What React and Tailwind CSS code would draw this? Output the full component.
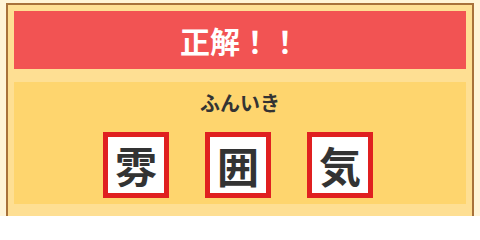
export default function App() {
  const chars = ["雰", "囲", "気"];
  return (
    <div
      className="h-[216px] overflow-hidden bg-[#fff4d6] px-[6px] pt-[3px]"
      style={{ fontFamily: '"Noto Sans CJK JP", "Noto Sans", sans-serif' }}
    >
      <div className="border-2 border-[#a8723a] bg-[#fedf93] p-[6px] pb-[20px]">
        <div className="flex h-[58px] items-center justify-center bg-[#f25353]">
          <span className="text-[30px] font-bold leading-none text-white">正解！！</span>
        </div>
        <div className="mt-[13px] flex flex-col items-center bg-[#fed56e] pb-[6px] pt-[7px]">
          <div className="text-[20px] font-bold leading-[28px] text-[#333333]">ふんいき</div>
          <div className="mr-[4px] mt-[15px] flex gap-[36px]">
            {chars.map((c) => (
              <div
                key={c}
                className="flex h-[66px] w-[66px] items-center justify-center border-[5px] border-[#e02020] bg-white"
              >
                <span className="text-[42px] font-bold leading-none text-[#333333]">{c}</span>
              </div>
            ))}
          </div>
        </div>
      </div>
    </div>
  );
}
